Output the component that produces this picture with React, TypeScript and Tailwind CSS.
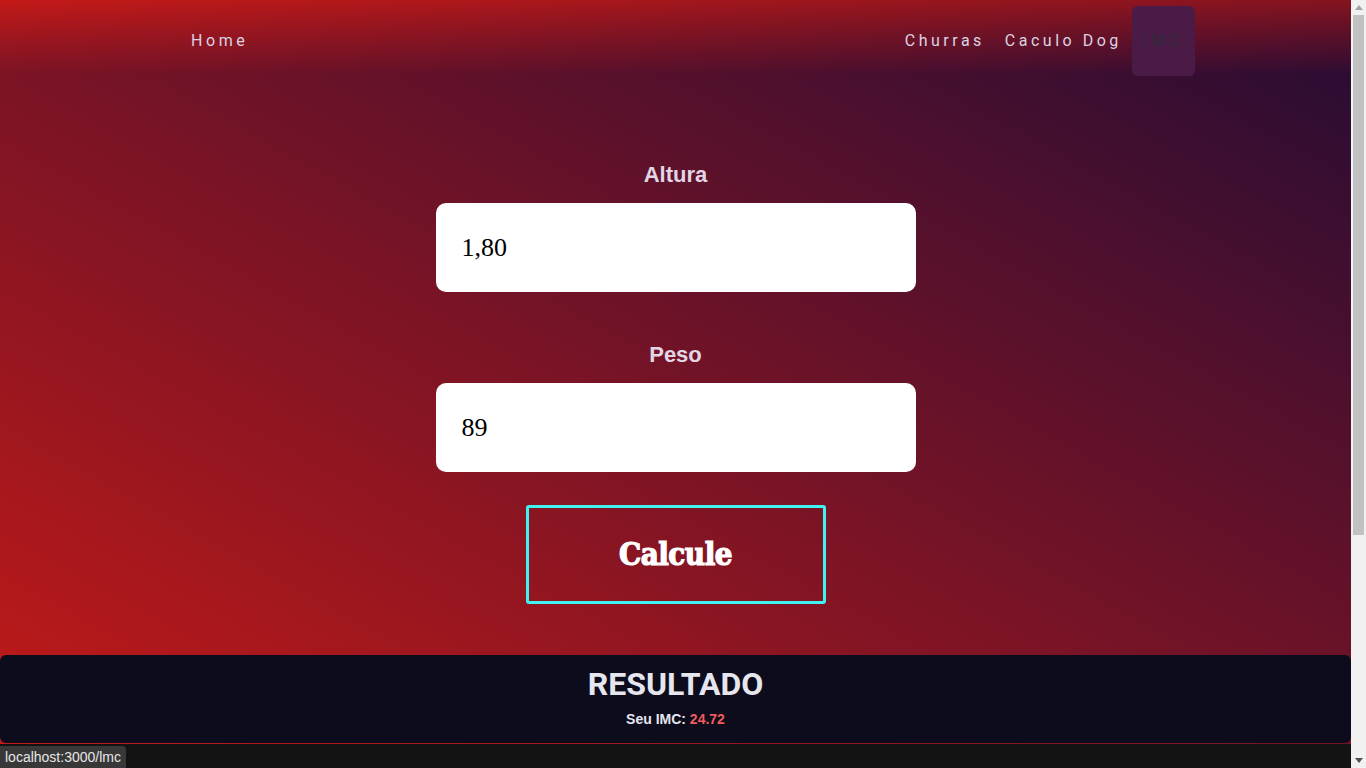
import React from 'react';

const navFont = { fontFamily: 'Roboto, "Liberation Sans", sans-serif' };

function Field({ label, value }: { label: string; value: string }) {
  return (
    <div className="flex flex-col items-center">
      <label className="text-[22px] leading-[25px] font-bold text-[#e3d5e6] font-['Liberation_Sans',Arial,sans-serif]">
        {label}
      </label>
      <input
        readOnly
        value={value}
        className="mt-4 w-[480px] h-[89px] rounded-[10px] bg-white pl-[26px] text-[26px] text-black outline-none font-['Liberation_Serif','Times_New_Roman',serif]"
      />
    </div>
  );
}

function Scrollbar() {
  return (
    <div className="fixed top-0 right-0 w-[15px] h-screen bg-[#f1f1f1] flex flex-col items-center">
      <div className="h-[15px] flex items-center justify-center">
        <svg width="8" height="5" viewBox="0 0 8 5"><path d="M4 0 8 5H0z" fill="#a3a3a3" /></svg>
      </div>
      <div className="w-[11px] h-[520px] bg-[#c1c1c1]" />
      <div className="flex-1" />
      <div className="h-[15px] flex items-center justify-center">
        <svg width="8" height="5" viewBox="0 0 8 5"><path d="M0 0h8L4 5z" fill="#505050" /></svg>
      </div>
    </div>
  );
}

export default function App() {
  return (
    <div className="min-h-screen bg-[#131313]">
      <div className="mr-[15px]">
        <section className="flex flex-col bg-[linear-gradient(to_top_right,#c21a18,#240c35)]">
          <nav className="relative h-20 pt-px pl-[181px] pr-[156px] flex items-center justify-between" style={navFont}>
            <div className="absolute inset-0 bg-[linear-gradient(to_right,#c41a18,#851420)] [mask-image:linear-gradient(to_bottom,black,transparent_95%)]" />
            <a className="relative px-2.5 text-base tracking-[3.6px] text-[#dcd2e2]">Home</a>
            <div className="relative flex items-center">
              <a className="px-2.5 text-base tracking-[3.5px] text-[#dcd2e2]">Churras</a>
              <a className="px-2.5 text-base tracking-[3.5px] text-[#dcd2e2]">Caculo Dog</a>
              <a className="h-[70px] flex items-center px-3 rounded-md bg-[#4b1b48] text-base tracking-[3.5px] text-[#34293a]">IMC</a>
            </div>
          </nav>

          <main className="flex flex-col items-center pt-[82px]">
            <Field label="Altura" value="1,80" />
            <div className="h-[50px]" />
            <Field label="Peso" value="89" />
            <button className="mt-[33px] w-[300px] h-[99px] rounded-[3px] border-[3px] border-[#3ef3f0] text-white text-[31px] font-bold tracking-[-0.5px] [-webkit-text-stroke:1.2px_white] font-['DejaVu_Serif_Condensed','DejaVu_Serif',serif]">
              Calcule
            </button>
          </main>

          <div className="mt-[51px] mb-px h-[88px] rounded-md bg-[#0c0c1c] flex flex-col items-center" style={navFont}>
            <h2 className="mt-[11px] text-[32px] leading-[36px] font-bold text-[#e6e6ef]">RESULTADO</h2>
            <p className="mt-[7px] text-sm font-bold text-[#e6e6ef] font-['Liberation_Sans',Arial,sans-serif]">
              Seu IMC: <span className="text-[#f05b5b]">24.72</span>
            </p>
          </div>
        </section>

        <div className="h-[346px]" />
      </div>

      <Scrollbar />

      <div className="fixed bottom-0 left-0 h-[22px] px-[5px] flex items-center rounded-tr-[4px] bg-[#383838] text-sm text-[#e6e6e6] font-['Liberation_Sans',Arial,sans-serif]">
        localhost:3000/lmc
      </div>
    </div>
  );
}
